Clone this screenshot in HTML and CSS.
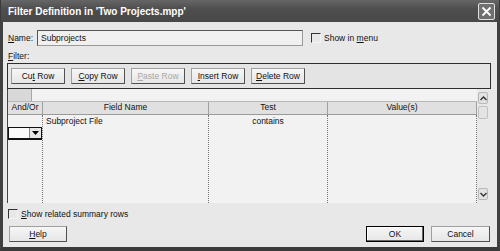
FILE: index.html
```html
<!DOCTYPE html>
<html lang="en">
<head>
    <meta charset="UTF-8">
    <title>Filter Definition</title>
    <link rel="stylesheet" href="styles.css">
</head>
<body>
    <div class="window">
        <div class="titlebar">
            <span class="title">Filter Definition in 'Two Projects.mpp'</span>
            <div class="close-btn">
                <svg width="11" height="11" viewBox="0 0 11 11">
                    <path d="M1.5 1.5 L9.5 9.5 M9.5 1.5 L1.5 9.5" stroke="#fff" stroke-width="1.8" fill="none"/>
                </svg>
            </div>
        </div>

        <div class="content">
            <div class="name-row">
                <span class="label"><u>N</u>ame:</span>
                <div class="textbox">Subprojects</div>
                <span class="checkbox"></span>
                <span class="check-text">Show in <u>m</u>enu</span>
            </div>

            <div class="filter-label"><u>F</u>ilter:</div>

            <div class="toolbar">
                <div class="btn"><span>Cu<u>t</u> Row</span></div>
                <div class="btn"><span><u>C</u>opy Row</span></div>
                <div class="btn disabled"><span><u>P</u>aste Row</span></div>
                <div class="btn"><span><u>I</u>nsert Row</span></div>
                <div class="btn"><span><u>D</u>elete Row</span></div>
            </div>

            <div class="grid">
                <div class="table">
                    <div class="top-row"><span class="corner"></span></div>
                    <div class="head-row">
                        <div class="hcell c-andor">And/Or</div>
                        <div class="hcell c-field">Field Name</div>
                        <div class="hcell c-test">Test</div>
                        <div class="hcell c-value">Value(s)</div>
                    </div>
                    <div class="body-row">
                        <div class="col c-andor">
                            <div class="cell"></div>
                            <div class="dropdown">
                                <span class="dd-arrow">
                                    <svg width="7" height="4" viewBox="0 0 7 4"><path d="M0 0 H7 L3.5 4 Z" fill="#000"/></svg>
                                </span>
                            </div>
                        </div>
                        <div class="col c-field">
                            <div class="cell">Subproject File</div>
                        </div>
                        <div class="col c-test">
                            <div class="cell center">contains</div>
                        </div>
                        <div class="col c-value">
                            <div class="cell"></div>
                        </div>
                    </div>
                </div>
                <div class="vscroll">
                    <div class="sb-btn">
                        <svg width="7" height="5" viewBox="0 0 7 5"><path d="M0.5 4 L3.5 1 L6.5 4" stroke="#333" stroke-width="1.4" fill="none"/></svg>
                    </div>
                    <div class="sb-thumb"></div>
                    <div class="sb-track"></div>
                    <div class="sb-btn">
                        <svg width="7" height="5" viewBox="0 0 7 5"><path d="M0.5 1 L3.5 4 L6.5 1" stroke="#333" stroke-width="1.4" fill="none"/></svg>
                    </div>
                </div>
            </div>

            <div class="summary-row">
                <span class="checkbox"></span>
                <span class="check-text"><u>S</u>how related summary rows</span>
            </div>

            <div class="footer">
                <div class="btn wide"><span><u>H</u>elp</span></div>
                <div class="spacer"></div>
                <div class="btn wide default"><span>OK</span></div>
                <div class="btn wide cancel"><span>Cancel</span></div>
            </div>
        </div>
    </div>
</body>
</html>
```

FILE: styles.css
```css
body {
    margin: 0;
    background: #e8e8e8;
    font-family: 'Liberation Sans', Arial, sans-serif;
    font-size: 8.5px;
    color: #111;
}
u {
    text-decoration: underline;
}
.window {
    width: 500px;
    height: 251px;
    display: flex;
    flex-direction: column;
    background: #e8e8e8;
}
.titlebar {
    height: 22px;
    background: linear-gradient(#666, #4e4e4e 40%, #484848);
    display: flex;
    align-items: center;
    padding: 0 4px 0 7px;
    border-left: 1px solid #3a3a3a;
    border-right: 1px solid #3a3a3a;
}
.title {
    flex: 1;
    color: #fff;
    font-weight: bold;
    font-size: 10px;
    padding-top: 1px;
}
.close-btn {
    width: 15px;
    height: 15px;
    border: 1px solid #e0e0e0;
    border-radius: 2px;
    background: #707070;
    display: flex;
    align-items: center;
    justify-content: center;
}
.content {
    flex: 1;
    border-left: 3px solid #404040;
    border-right: 3px solid #404040;
    border-bottom: 4px solid #3a3a3a;
    padding: 8px 6px 0 4px;
    display: flex;
    flex-direction: column;
}
.name-row {
    display: flex;
    align-items: center;
    height: 16px;
}
.label {
    width: 29px;
    padding-left: 1px;
}
.textbox {
    width: 261px;
    height: 14px;
    line-height: 14px;
    padding-left: 3px;
    border: 1px solid #9a9a9a;
    border-top-color: #555;
    border-left-color: #555;
    background: #f0f0f0;
}
.checkbox {
    width: 8px;
    height: 8px;
    border: 1px solid #f4f4f4;
    border-top-color: #333;
    border-left-color: #333;
    background: #e8e8e8;
    margin-left: 8px;
}
.check-text {
    margin-left: 3px;
}
.filter-label {
    margin-top: 5px;
    height: 12px;
    padding-left: 1px;
}
.toolbar {
    border: 1px solid #2e2e2e;
    background: #e4e4e4;
    display: flex;
    gap: 6px;
    padding: 4px 0 0 3px;
    box-sizing: border-box;
    height: 26px;
}
.btn {
    width: 54px;
    height: 16px;
    flex: none;
    box-sizing: border-box;
    border: 1px solid #a0a0a0;
    border-right-color: #505050;
    border-bottom-color: #505050;
    background: linear-gradient(#f6f6f6, #e6e6e6);
    display: flex;
    align-items: center;
    justify-content: center;
}
.btn.disabled {
    color: #a8a8a8;
}
.grid {
    display: flex;
    height: 114px;
}
.table {
    width: 470px;
    border-left: 1px solid #444;
    box-sizing: border-box;
    display: flex;
    flex-direction: column;
    background: #f2f2f2;
}
.top-row {
    height: 13px;
    background: #f2f2f2;
    border-bottom: 1px solid #b8b8b8;
    box-sizing: border-box;
}
.corner {
    display: block;
    width: 23px;
    height: 12px;
    background: #d8d8d8;
    border-right: 1px solid #a8a8a8;
}
.head-row {
    display: flex;
    height: 12px;
    background: #e0e0e0;
    border-bottom: 1px solid #9a9a9a;
}
.hcell {
    box-sizing: border-box;
    border-right: 1px solid #a0a0a0;
    text-align: center;
    line-height: 11px;
}
.c-andor { width: 35px; }
.c-field { width: 166px; }
.c-test { width: 119px; }
.c-value { width: 149px; }
.body-row {
    flex: 1;
    display: flex;
}
.col {
    box-sizing: border-box;
    border-right: 1px dotted #777;
}
.cell {
    height: 12px;
    line-height: 12px;
    padding-left: 3px;
}
.cell.center {
    text-align: center;
    padding-left: 0;
}
.dropdown {
    height: 13px;
    box-sizing: border-box;
    border: 1px solid #111;
    border-width: 1px 1px 2px 1px;
    background: #fafafa;
    display: flex;
    justify-content: flex-end;
}
.dd-arrow {
    width: 11px;
    border-left: 1px solid #888;
    display: flex;
    align-items: center;
    justify-content: center;
    background: #e6e6e6;
}
.vscroll {
    width: 14px;
    display: flex;
    flex-direction: column;
    padding: 3px 3px 3px 1px;
    box-sizing: border-box;
}
.sb-btn {
    height: 10px;
    border: 1px solid #b8b8b8;
    border-radius: 2px;
    background: #e2e2e2;
    display: flex;
    align-items: center;
    justify-content: center;
}
.sb-thumb {
    height: 11px;
    margin-top: 2px;
    border: 1px solid #c0c0c0;
    border-radius: 2px;
    background: #e4e4e4;
}
.sb-track {
    flex: 1;
}
.summary-row {
    display: flex;
    align-items: center;
    height: 12px;
    margin-top: 5px;
}
.summary-row .checkbox {
    margin-left: 1px;
}
.footer {
    display: flex;
    margin-top: 6px;
    gap: 7px;
    padding: 0 1px 0 2px;
}
.btn.wide {
    width: 58px;
}
.btn.cancel {
    width: 59px;
}
.btn.default {
    border: 1px solid #000;
    box-shadow: inset -1px -1px #666, inset 1px 1px #fff;
}
.spacer {
    flex: 1;
}
```
